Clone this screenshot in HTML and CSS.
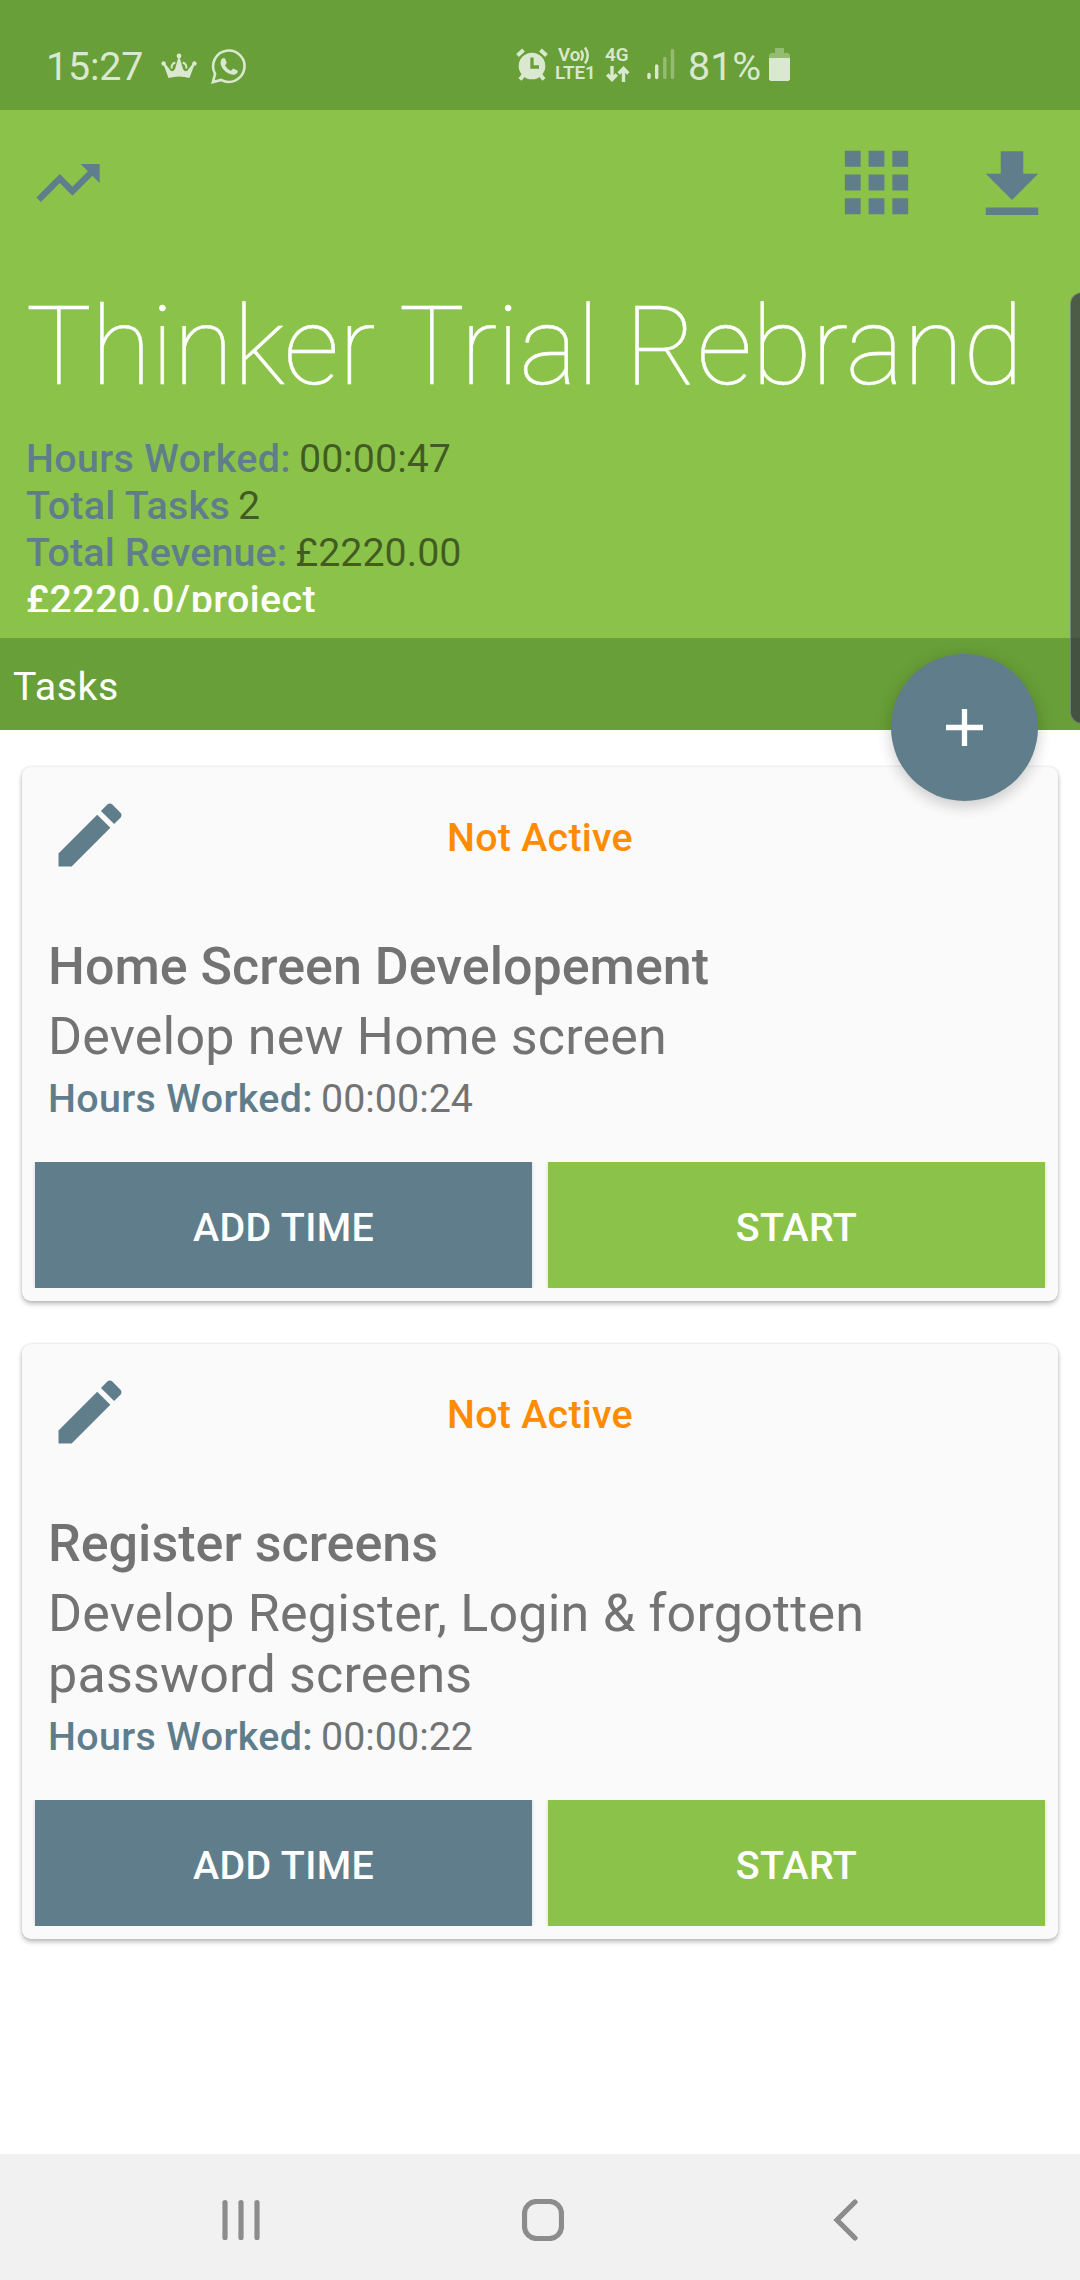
FILE: index.html
```html
<!DOCTYPE html>
<html lang="en">
<head>
<meta charset="utf-8">
<title>Thinker Trial Rebrand</title>
<link rel="stylesheet" href="styles.css">
</head>
<body>
<div class="screen">
  <div class="status">
    <span class="status-text clock">15:27</span>
    <svg class="crown" width="36" height="28" viewBox="0 0 36 28" fill="currentColor"><circle cx="18" cy="3" r="2.4"/><circle cx="2.600" cy="10.500" r="2.200"/><circle cx="33.400" cy="10.500" r="2.200"/><path d="M2.300 11L3.700 10L9.500 17.500Q12 19.500 14 16L17.200 5h1.600L22 16Q24 19.500 26.500 17.500L32.300 10L33.700 11L28.500 25Q18 22 7.500 25z"/><path d="M10.700 15.500q-.7-4.500 3.600-6M25.300 15.500q.7-4.500-3.600-6" fill="none" stroke="currentColor" stroke-width="2"/></svg>
    <svg class="whatsapp" width="36" height="36" viewBox="0 0 36 36" fill="none" stroke="currentColor" stroke-width="2.600"><path d="M1.900 34.100L4.100 25.800A15.700 15.700 0 1 1 10.200 31.900z"/><path d="M11.500 10.200h2.300l2 4.600-1.800 2.600q2.400 4 6 5.400l2.200-2.300 4.600 2.200q-.300 4-4.500 4.100C15 26.200 9.500 19.500 9.500 14.500q0-3 2-4.300z" fill="currentColor" stroke="none"/></svg>
    <svg class="alarm" width="32" height="34" viewBox="0 0 32 34"><g stroke="currentColor" stroke-width="4"><path d="M1.500 7.500L7.500 2M30.500 7.500L24.500 2M4 31.500l4-5M28 31.500l-4-5"/></g><circle cx="16" cy="18" r="13.300" fill="currentColor"/><path class="hands" d="M16 9.500V19h7" fill="none" stroke-width="3.300"/></svg>
    <div class="volte"><span class="volte-top">Vo<svg width="9" height="18" viewBox="0 0 9 18" fill="none" stroke="currentColor" stroke-width="2.400"><path d="M1 4.500q3.500 5 0 10M5 1.500q5.500 8 0 16"/></svg></span><span>LTE1</span></div>
    <div class="data"><span>4G</span><svg width="24" height="16" viewBox="0 0 24 16" fill="none" stroke="currentColor" stroke-width="3.400"><path d="M6 0v14M1.200 8.500L6 13.500 10.800 8.500M17.500 16V2M12.700 7.500l4.800-5L22.300 7.500"/></svg></div>
    <svg class="signal" width="28" height="34" viewBox="0 0 28 34" stroke="currentColor" stroke-width="3.400" stroke-linecap="round"><path d="M2 27.500v3M9.700 19v11.500"/><path opacity=".4" d="M17.800 11.500v19M25.500 3.500v27"/></svg>
    <span class="status-text percent">81%</span>
    <svg class="battery" width="21" height="33" viewBox="0 0 21 33" fill="currentColor"><path opacity=".4" d="M6 0h9v5h4l2 2v3H0V7l2-2h4z"/><path d="M0 10h21v21.500L19.500 33h-18L0 31.500z"/></svg>
  </div>

  <header class="header">
    <div class="toolbar">
      <svg class="trend" viewBox="0 0 24 24"><path d="M16 6l2.290 2.290-4.880 4.880-4-4L2 16.590 3.410 18l6-6 4 4 6.300-6.290L22 12V6z"/></svg>
      <svg class="apps" viewBox="0 0 24 24"><path d="M4 8h4V4H4v4zm6 12h4v-4h-4v4zm-6 0h4v-4H4v4zm0-6h4v-4H4v4zm6 0h4v-4h-4v4zm6-10v4h4V4h-4zm-6 4h4V4h-4v4zm6 6h4v-4h-4v4zm0 6h4v-4h-4v4z"/></svg>
      <svg class="download" viewBox="0 0 24 24"><path d="M19 9h-4V3H9v6H5l7 7 7-7zM5 18v2h14v-2H5z"/></svg>
    </div>
    <h1 class="title">Thinker Trial Rebrand</h1>
    <div class="meta">
      <div><b>Hours Worked:</b> 00:00:47</div>
      <div><b class="snug">Total Tasks</b> 2</div>
      <div><b class="tight">Total Revenue:</b> £2220.00</div>
      <div class="rate">£2220.0/project</div>
    </div>
  </header>

  <div class="tasks-bar">
    <span>Tasks</span>
    <button class="fab" aria-label="Add task"><svg width="37" height="37" viewBox="0 0 37 37"><path d="M18.500 0v37M0 18.500h37" stroke="#fff" stroke-width="5.300"/></svg></button>
  </div>

  <main class="list">
    <article class="card">
      <div class="card-head">
        <svg class="edit" viewBox="0 0 24 24"><path d="M3 17.250V21h3.750L17.810 9.940l-3.750-3.750L3 17.250zM20.710 7.040c.39-.39.39-1.020 0-1.410l-2.340-2.340c-.39-.39-1.020-.39-1.410 0l-1.830 1.830 3.750 3.750 1.830-1.830z"/></svg>
        <span class="state">Not Active</span>
      </div>
      <h2 class="name">Home Screen Developement</h2>
      <p class="desc">Develop new Home screen</p>
      <p class="hours"><b>Hours Worked:</b> 00:00:24</p>
      <div class="actions"><button class="btn add">ADD TIME</button><button class="btn start">START</button></div>
    </article>
    <article class="card">
      <div class="card-head">
        <svg class="edit" viewBox="0 0 24 24"><path d="M3 17.250V21h3.750L17.810 9.940l-3.750-3.750L3 17.250zM20.710 7.040c.39-.39.39-1.020 0-1.410l-2.340-2.340c-.39-.39-1.020-.39-1.410 0l-1.830 1.830 3.750 3.750 1.830-1.830z"/></svg>
        <span class="state">Not Active</span>
      </div>
      <h2 class="name">Register screens</h2>
      <p class="desc">Develop Register, Login &amp; forgotten<br>password screens</p>
      <p class="hours"><b>Hours Worked:</b> 00:00:22</p>
      <div class="actions"><button class="btn add">ADD TIME</button><button class="btn start">START</button></div>
    </article>
  </main>

  <nav class="nav">
    <svg class="recents" width="38" height="42" viewBox="0 0 38 42"><path d="M3 3.500v35M19 3.500v35M35 3.500v35"/></svg>
    <svg class="home" width="42" height="42" viewBox="0 0 42 42"><rect x="2.500" y="2.500" width="37" height="37" rx="12"/></svg>
    <svg class="back" width="26" height="42" viewBox="0 0 26 42"><path d="M22 3L4 21l18 18"/></svg>
  </nav>

  <div class="edge-panel"></div>
</div>
</body>
</html>
```
FILE: styles.css
```css
* { box-sizing: border-box; margin: 0; padding: 0; }
body { font-family: Roboto, sans-serif; background: #fff; font-size: 39.4px; line-height: 47px; }
b { font-weight: 500; letter-spacing: .36px; margin-right: -1.8px; }
svg { display: block; flex: none; }
button { border: 0; font: inherit; }
.screen { position: relative; width: 1080px; height: 2280px; display: flex; flex-direction: column; overflow: hidden; }

.status { height: 110px; background: #689f38; color: #d9e8ce; display: flex; align-items: flex-start; flex: none; }
.status-text { line-height: 47px; margin-top: 43px; white-space: nowrap; }
.clock { width: 115px; margin-left: 46px; letter-spacing: -.2px; }
.crown { margin-top: 52.5px; }
.whatsapp { margin: 48px 0 0 14px; }
.alarm { margin: 48px 0 0 269px; }
.hands { stroke: #689f38; }
.volte, .data { font-size: 18.800px; font-weight: 600; line-height: 18px; display: flex; flex-direction: column; }
.volte { width: 40px; margin: 46px 0 0 7px; }
.volte-top { display: flex; padding-left: 3px; }
.data { width: 26px; margin: 46px 0 0 10px; }
.data svg { margin: 2px 0 0 1px; }
.signal { margin: 47px 0 0 16px; }
.percent { width: 73px; margin-left: 13px; }
.battery { margin: 48px 0 0 8px; }

.header { height: 528px; background: #8bc34a; flex: none; }
.toolbar { display: flex; height: 172px; padding: 25px 23px 0 30px; align-items: flex-start; fill: #607d8b; }
.trend { width: 76px; height: 76px; margin-top: 10px; }
.apps { width: 95px; height: 95px; margin-left: auto; }
.download { width: 90px; height: 90px; margin: 5px 0 0 43px; }
.title { font-weight: 100; font-size: 109.700px; line-height: 130px; letter-spacing: -.25px; color: #fff; -webkit-text-stroke: .5px #fff; padding-left: 26px; white-space: nowrap; }
.meta { height: 177px; margin: 23px 0 0 26px; overflow: hidden; color: rgba(0,0,0,.54); }
.meta b { color: #607d8b; }
.meta .snug { letter-spacing: .3px; }
.meta .tight { letter-spacing: .15px; }
.rate { color: #fff; font-weight: 500; letter-spacing: .4px; }

.tasks-bar { position: relative; height: 92px; background: #689f38; color: #fff; display: flex; align-items: center; padding: 5px 0 0 13px; letter-spacing: .5px; flex: none; }
.fab { position: absolute; left: 891px; top: 16px; z-index: 2; width: 147px; height: 147px; border-radius: 50%; background: #607d8b; display: flex; align-items: center; justify-content: center; box-shadow: 0 6px 14px rgba(0,0,0,.14), 0 1px 20px rgba(0,0,0,.07); }

.list { flex: 1; display: flex; flex-direction: column; gap: 43px; padding: 37px 22px 0; }
.card { background: #fafafa; border-radius: 9px; padding: 26px 13px 13px; box-shadow: 0 3px 5px rgba(0,0,0,.25), 0 0 3px rgba(0,0,0,.12); }
.card-head { display: grid; grid-template-columns: 85px 1fr 85px; height: 144px; padding: 0 12px; }
.edit { width: 84px; height: 84px; margin-left: 1px; fill: #607d8b; }
.state { text-align: center; color: #ff8c00; font-weight: 500; letter-spacing: .25px; padding-top: 21px; }
.name, .desc { font-size: 52px; color: #737373; padding-left: 13px; }
.name { font-weight: 500; line-height: 59px; letter-spacing: .02px; }
.desc { font-weight: 400; line-height: 61px; letter-spacing: .2px; margin-top: 10px; }
.hours { color: #737373; padding-left: 13px; margin-top: 8px; }
.hours b { color: #607d8b; }
.actions { display: grid; grid-template-columns: 1fr 1fr; gap: 16px; margin-top: 40px; }
.btn { height: 126px; color: #fff; font-weight: 500; letter-spacing: .35px; padding-top: 5px; box-shadow: 0 0 4px rgba(0,0,0,.15); clip-path: inset(0 -6px 0 -6px); }
.add { background: #607d8b; }
.start { background: #8bc34a; }

.nav { height: 126px; background: #f1f1f1; display: flex; align-items: flex-start; padding: 45px 0 0 222px; flex: none; }
.nav svg { fill: none; stroke: #8c8c8c; stroke-width: 5.200; stroke-linecap: round; }
.home { margin-left: 262px; }
.back { margin-left: 269px; }
.edge-panel { position: absolute; left: 1070px; top: 292px; width: 24px; height: 432px; border-radius: 12px; background: rgba(55,55,70,.74); border: 1px solid rgba(255,255,255,.25); }
```
